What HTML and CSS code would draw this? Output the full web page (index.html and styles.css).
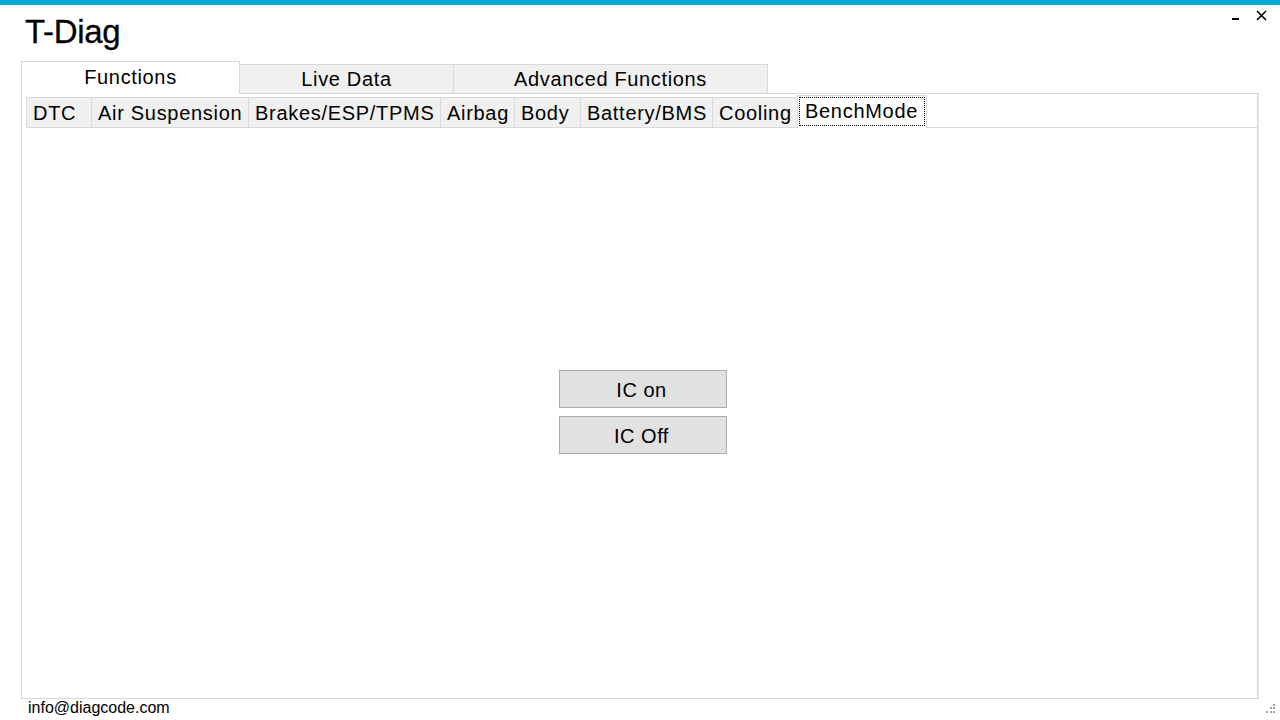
FILE: index.html
```html
<!DOCTYPE html>
<html>
<head>
<meta charset="utf-8">
<title>T-Diag</title>
<link rel="stylesheet" href="styles.css">
</head>
<body>
<div class="topbar"></div>
<div class="win-controls">
  <svg class="ctl-min" width="8" height="3" viewBox="0 0 8 3"><rect x="0" y="0" width="7" height="2" fill="#000"/></svg>
  <svg class="ctl-close" width="11" height="11" viewBox="0 0 11 11"><path d="M1 1 L10 10 M10 1 L1 10" stroke="#000" stroke-width="1.6"/></svg>
</div>
<h1 class="app-title">T-Diag</h1>
<div class="main">
  <div class="main-tabs">
    <div class="main-tab active w-func">Functions</div>
    <div class="main-tab w-live">Live Data</div>
    <div class="main-tab w-adv">Advanced Functions</div>
  </div>
  <div class="panel">
    <div class="sub-tabs">
      <div class="sub-tab w-dtc">DTC</div>
      <div class="sub-tab w-air">Air Suspension</div>
      <div class="sub-tab w-brk">Brakes/ESP/TPMS</div>
      <div class="sub-tab w-abg">Airbag</div>
      <div class="sub-tab w-body">Body</div>
      <div class="sub-tab w-bat">Battery/BMS</div>
      <div class="sub-tab w-cool">Cooling</div>
      <div class="sub-tab active w-bench"><span class="focus">BenchMode</span></div>
    </div>
    <div class="page">
      <div class="buttons">
        <button class="btn">IC on</button>
        <button class="btn">IC Off</button>
      </div>
    </div>
  </div>
</div>
<div class="footer">info@diagcode.com</div>
<svg class="grip" width="12" height="12" viewBox="0 0 12 12">
  <rect x="9" y="1" width="2" height="2" fill="#a0a0a0"/>
  <rect x="6" y="4" width="2" height="2" fill="#a0a0a0"/>
  <rect x="9" y="4" width="2" height="2" fill="#a0a0a0"/>
  <rect x="2" y="8" width="2" height="2" fill="#a0a0a0"/>
  <rect x="6" y="8" width="2" height="2" fill="#a0a0a0"/>
  <rect x="9" y="8" width="2" height="2" fill="#a0a0a0"/>
</svg>
</body>
</html>
```

FILE: styles.css
```css
html, body {
  margin: 0;
  padding: 0;
}
body {
  width: 1280px;
  height: 720px;
  overflow: hidden;
  background: #ffffff;
  font-family: "Liberation Sans", Arial, sans-serif;
  color: #000;
  position: relative;
}
.topbar {
  height: 5px;
  background: #00a9d5;
}
.win-controls {
  position: absolute;
  top: 11px;
  right: 13px;
  display: flex;
  align-items: flex-start;
  gap: 16px;
}
.ctl-min {
  margin-top: 7px;
  display: block;
}
.ctl-close {
  display: block;
  margin-top: -1px;
}
.app-title {
  margin: 7px 0 0 25px;
  font-size: 33px;
  line-height: 40px;
  font-weight: normal;
  letter-spacing: -0.3px;
  -webkit-text-stroke: 0.3px #000;
}
.main {
  margin: 9px 0 0 21px;
  width: 1237px;
}
.main-tabs {
  display: flex;
  align-items: flex-end;
  height: 33px;
  margin-bottom: -1px;
  position: relative;
  z-index: 1;
}
.main-tab {
  box-sizing: border-box;
  height: 29px;
  margin-bottom: 1px;
  margin-left: -1px;
  padding-top: 2px;
  border: 1px solid #d9d9d9;
  border-bottom: none;
  background: #f0f0f0;
  text-align: center;
  font-size: 20px;
  line-height: 25px;
  letter-spacing: 0.65px;
}
.main-tab.active {
  height: 33px;
  margin-bottom: 0;
  margin-left: 0;
  padding-top: 3px;
  background: #fff;
  position: relative;
  z-index: 2;
}
.w-func { width: 219px; }
.w-live { width: 215px; }
.w-adv { width: 315px; }

.panel {
  box-sizing: border-box;
  height: 606px;
  border: 1px solid #d9d9d9;
  border-right-color: #d6d6d6;
  box-shadow: 1px 0 0 #ebebeb;
  padding: 1px 0 0 4px;
  display: flex;
  flex-direction: column;
}
.sub-tabs {
  display: flex;
  align-items: flex-end;
  height: 33px;
  margin-bottom: -1px;
  position: relative;
  z-index: 1;
}
.sub-tab {
  box-sizing: border-box;
  height: 30px;
  margin-bottom: 1px;
  margin-left: -1px;
  padding: 3px 0 0 6px;
  border: 1px solid #d9d9d9;
  border-bottom: none;
  background: #f0f0f0;
  font-size: 20px;
  line-height: 25px;
  letter-spacing: 0.7px;
  white-space: nowrap;
}
.sub-tab:first-child { margin-left: 0; }
.sub-tab.active {
  height: 33px;
  margin-bottom: 0;
  padding: 1px 0 0 1px;
  background: #fff;
  position: relative;
  z-index: 2;
}
.focus {
  display: block;
  box-sizing: border-box;
  width: 126px;
  height: 29px;
  border: 1px dotted #000;
  padding: 2px 0 0 5px;
  line-height: 23px;
}
.w-dtc { width: 66px; }
.w-air { width: 158px; }
.w-brk { width: 193px; }
.w-abg { width: 75px; }
.w-body { width: 67px; }
.w-bat { width: 133px; }
.w-cool { width: 86px; }
.w-bench { width: 130px; }

.page {
  flex: 1;
  border-top: 1px solid #d9d9d9;
}
.buttons {
  display: flex;
  flex-direction: column;
  align-items: flex-start;
  gap: 8px;
  padding: 242px 0 0 533px;
}
.btn {
  box-sizing: border-box;
  width: 168px;
  height: 38px;
  border: 1px solid #adadad;
  background: #e1e1e1;
  padding: 2px 3px 0 0;
  margin: 0;
  font-family: "Liberation Sans", Arial, sans-serif;
  font-size: 20px;
  line-height: 32px;
  letter-spacing: 0.5px;
  color: #000;
  text-align: center;
  display: block;
}
.footer {
  padding-left: 28px;
  font-size: 16px;
  line-height: 18px;
  margin-top: 0;
}
.grip {
  position: absolute;
  right: 4px;
  bottom: 5px;
}
```
